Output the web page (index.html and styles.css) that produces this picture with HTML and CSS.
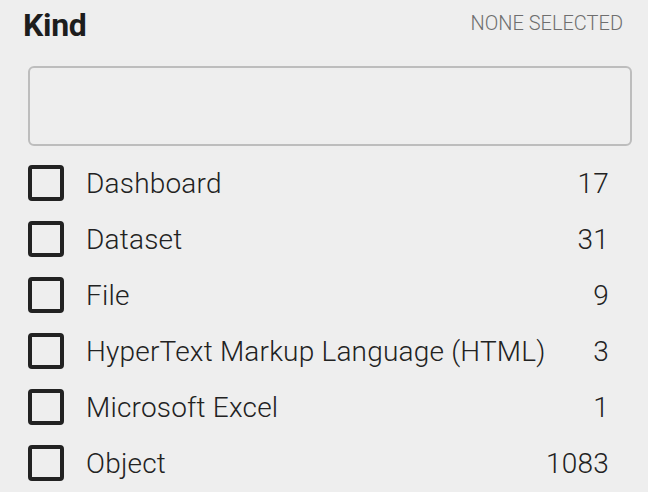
FILE: index.html
```html
<!DOCTYPE html>
<html lang="en">
<head>
<meta charset="utf-8">
<title>Kind filter</title>
<link rel="stylesheet" href="styles.css">
</head>
<body>
<div class="facet">
  <div class="facet-header">
    <h2 class="facet-title">Kind</h2>
    <span class="facet-status">NONE SELECTED</span>
  </div>
  <input class="facet-search" type="text" aria-label="Filter kinds">
  <ul class="facet-list">
    <li class="facet-item"><span class="check"></span><span class="label">Dashboard</span><span class="count">17</span></li>
    <li class="facet-item"><span class="check"></span><span class="label">Dataset</span><span class="count">31</span></li>
    <li class="facet-item"><span class="check"></span><span class="label">File</span><span class="count">9</span></li>
    <li class="facet-item"><span class="check"></span><span class="label">HyperText Markup Language (HTML)</span><span class="count">3</span></li>
    <li class="facet-item"><span class="check"></span><span class="label">Microsoft Excel</span><span class="count">1</span></li>
    <li class="facet-item"><span class="check"></span><span class="label">Object</span><span class="count">1083</span></li>
  </ul>
</div>
</body>
</html>
```
FILE: styles.css
```css
html, body {
  margin: 0;
  padding: 0;
  background: #eeeeee;
}
body {
  font-family: Roboto, "Liberation Sans", sans-serif;
  color: #222222;
  width: 648px;
  height: 492px;
  overflow: hidden;
}
.facet {
  padding: 0 16px 0 28px;
}
.facet-header {
  display: flex;
  justify-content: space-between;
  align-items: flex-start;
  margin-left: -5px;
  padding-right: 9px;
  height: 56px;
}
.facet-title {
  margin: 0;
  font-size: 32px;
  font-weight: 700;
  line-height: 50px;
  color: #1d1d1d;
  letter-spacing: -0.3px;
}
.facet-status {
  margin-top: 11px;
  font-size: 20px;
  line-height: 24px;
  font-weight: 300;
  color: #6e6e6e;
}
.facet-search {
  display: block;
  box-sizing: border-box;
  width: 604px;
  height: 80px;
  margin: 10px 0 0 0;
  border: 2px solid #bdbdbd;
  border-radius: 6px;
  background: #eeeeee;
  outline: none;
}
.facet-list {
  list-style: none;
  margin: 9px 0 0 0;
  padding: 0;
  width: 581px;
}
.facet-item {
  display: flex;
  align-items: center;
  height: 56px;
  font-size: 28px;
  font-weight: 300;
}
.check {
  box-sizing: border-box;
  width: 36px;
  height: 36px;
  border: 4px solid #222222;
  border-radius: 4px;
  flex: none;
}
.label {
  margin-left: 22px;
  flex: 1;
  white-space: nowrap;
  letter-spacing: 0.2px;
}
.count {
  text-align: right;
  letter-spacing: 0.2px;
}
```
